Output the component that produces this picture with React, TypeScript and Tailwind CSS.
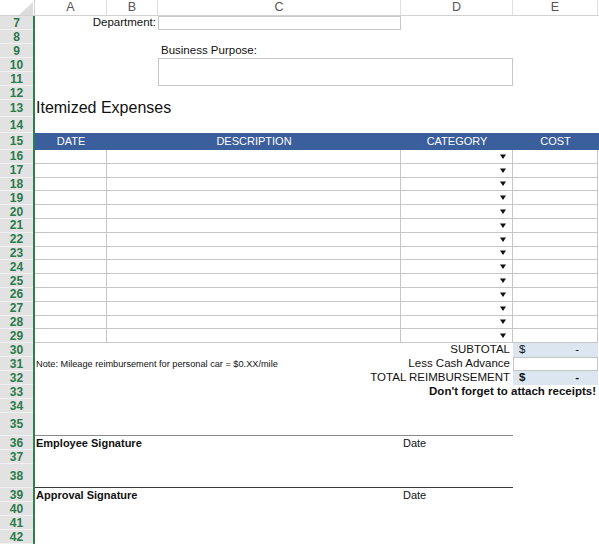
import type { ReactNode } from 'react';

const font = { fontFamily: '"Liberation Sans", Arial, sans-serif' };

function Row({ n, h, children }: { n?: number; h: string; children?: ReactNode }) {
  return (
    <div className={`flex shrink-0 ${h}`}>
      <div className="flex w-[33px] shrink-0 items-center justify-center border-b border-[#f1f1f1] bg-[#e2e2e2] text-[12px] leading-none font-bold text-[#2b7a4b]">
        {n}
      </div>
      <div className="w-[2px] shrink-0 bg-[#2f7d4e]" />
      <div className="flex min-w-0 flex-1">{children}</div>
    </div>
  );
}

function Arrow() {
  return (
    <svg width="6" height="5" viewBox="0 0 6 5">
      <polygon points="0,0.5 6,0.5 3,5" fill="#111" />
    </svg>
  );
}

export default function App() {
  const tableRows = Array.from({ length: 14 }, (_, i) => 16 + i);

  return (
    <div className="flex h-[545px] w-[599px] flex-col overflow-hidden bg-white text-[11.5px] text-[#111]" style={font}>
      {/* Column letters */}
      <div className="flex h-[16px] shrink-0 border-b border-[#d2d2d2] text-[12.5px] leading-none text-[#555]">
        <div className="relative w-[35px] shrink-0 border-r border-[#d2d2d2]">
          <svg className="absolute top-[2px] right-[1px]" width="14" height="13" viewBox="0 0 14 13">
            <polygon points="14,0 14,13 0,13" fill="#dcdcdc" />
          </svg>
        </div>
        <div className="flex w-[72px] items-center justify-center border-r border-[#dedede]">A</div>
        <div className="flex w-[51px] items-center justify-center border-r border-[#dedede]">B</div>
        <div className="flex w-[243px] items-center justify-center border-r border-[#dedede]">C</div>
        <div className="flex w-[112px] items-center justify-center border-r border-[#dedede]">D</div>
        <div className="flex w-[85px] items-center justify-center border-r border-[#dedede]">E</div>
      </div>

      <Row n={7} h="h-[14px]">
        <div className="flex w-[123px] items-center justify-end pr-[2px]">Department:</div>
        <div className="w-[243px] border border-[#c8c8c8]" />
      </Row>
      <Row n={8} h="h-[14px]" />
      <Row n={9} h="h-[14px]">
        <div className="w-[123px]" />
        <div className="flex items-center pl-[3px]">Business Purpose:</div>
      </Row>
      <Row n={10} h="h-[14px]">
        <div className="w-[123px]" />
        <div className="w-[355px] border-t border-r border-l border-[#c8c8c8]" />
      </Row>
      <Row n={11} h="h-[14px]">
        <div className="w-[123px]" />
        <div className="w-[355px] border-r border-b border-l border-[#c8c8c8]" />
      </Row>
      <Row n={12} h="h-[14px]" />
      <Row n={13} h="h-[17px]">
        <div className="flex items-end pb-[1px] pl-[1px] text-[16px] leading-none">Itemized Expenses</div>
      </Row>
      <Row n={14} h="h-[16px]" />
      <Row n={15} h="h-[17px]">
        <div className="flex flex-1 items-center bg-[#3b5e9c] text-[11px] leading-none text-white">
          <div className="w-[72px] text-center">DATE</div>
          <div className="w-[294px] text-center">DESCRIPTION</div>
          <div className="w-[112px] text-center">CATEGORY</div>
          <div className="w-[85px] text-center">COST</div>
        </div>
      </Row>

      {tableRows.map((n) => (
        <Row key={n} n={n} h="h-[13.8px]">
          <div className="w-[72px] border-r border-b border-[#c6c6c6]" />
          <div className="w-[294px] border-r border-b border-[#c6c6c6]" />
          <div className="flex w-[112px] items-center justify-end border-r border-b border-[#c6c6c6] pr-[6px]">
            <Arrow />
          </div>
          <div className="w-[85px] border-r border-b border-[#c6c6c6]" />
        </Row>
      ))}

      <Row n={30} h="h-[14px]">
        <div className="flex w-[478px] items-center justify-end pr-[3px] leading-none">SUBTOTAL</div>
        <div className="flex w-[85px] items-center justify-between bg-[#dce6f1] pr-[19px] pl-[6px] leading-none">
          <span>$</span>
          <span>-</span>
        </div>
      </Row>
      <Row n={31} h="h-[14px]">
        <div className="flex w-[242px] items-center pl-[1px] text-[9.2px] leading-none whitespace-nowrap">
          Note: Mileage reimbursement for personal car = $0.XX/mile
        </div>
        <div className="flex w-[236px] items-center justify-end pr-[3px] leading-none">Less Cash Advance</div>
        <div className="w-[85px] border border-[#c6c6c6]" />
      </Row>
      <Row n={32} h="h-[14px]">
        <div className="flex w-[478px] items-center justify-end pr-[3px] leading-none">TOTAL REIMBURSEMENT</div>
        <div className="flex w-[85px] items-center justify-between bg-[#dce6f1] pr-[19px] pl-[6px] leading-none font-bold">
          <span>$</span>
          <span>-</span>
        </div>
      </Row>
      <Row n={33} h="h-[14px]">
        <div className="flex w-[563px] items-center justify-end pr-[2px] leading-none font-bold">
          Don&apos;t forget to attach receipts!
        </div>
      </Row>
      <Row n={34} h="h-[14px]" />
      <Row n={35} h="h-[23px]">
        <div className="w-[478px] border-b border-[#8a8a8a]" />
      </Row>
      <Row n={36} h="h-[14px]">
        <div className="flex w-[366px] items-center pl-[1px] text-[11px] leading-none font-bold">Employee Signature</div>
        <div className="flex items-center pl-[2px] text-[11px] leading-none">Date</div>
      </Row>
      <Row n={37} h="h-[14px]" />
      <Row n={38} h="h-[24px]">
        <div className="w-[478px] border-b border-[#3a3a3a]" />
      </Row>
      <Row n={39} h="h-[14px]">
        <div className="flex w-[366px] items-center pl-[1px] text-[11px] leading-none font-bold">Approval Signature</div>
        <div className="flex items-center pl-[2px] text-[11px] leading-none">Date</div>
      </Row>
      <Row n={40} h="h-[14px]" />
      <Row n={41} h="h-[14px]" />
      <Row n={42} h="h-[14px]" />
    </div>
  );
}
